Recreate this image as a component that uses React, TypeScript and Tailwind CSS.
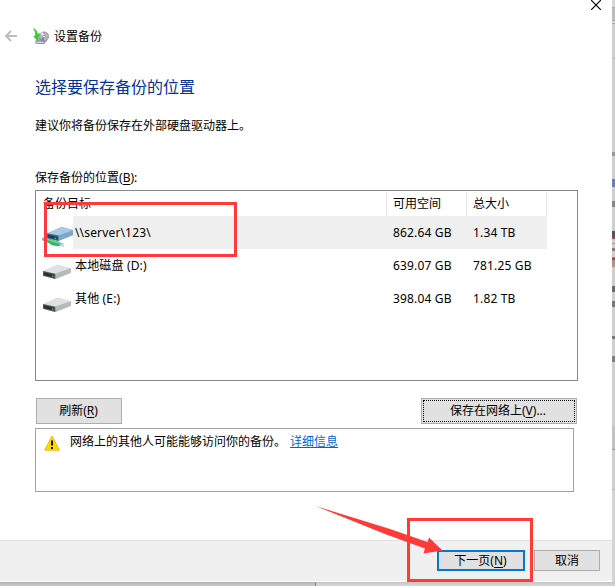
import type { ReactNode } from "react";
import clsx from "clsx";

interface Target {
  name: string;
  free: string;
  total: string;
  network?: boolean;
}

const targets: Target[] = [
  { name: "\\\\server\\123\\", free: "862.64 GB", total: "1.34 TB", network: true },
  { name: "本地磁盘 (D:)", free: "639.07 GB", total: "781.25 GB" },
  { name: "其他 (E:)", free: "398.04 GB", total: "1.82 TB" },
];

function BackupIcon() {
  return (
    <svg width="16" height="17" viewBox="0 0 16 17">
      <path d="M2.5 13l2.5-3h8l1 3-3 3H4z" fill="#a9adb0" />
      <path d="M2.8 13.2h8.4v2.2H2.8z" fill="#dfe1e3" stroke="#777b7e" strokeWidth="0.7" />
      <circle cx="11" cy="8.5" r="4.5" fill="#b6b9c4" stroke="#7c7e86" strokeWidth="0.8" />
      <path d="M11 8.5L7.5 6A4.3 4.3 0 0 1 10 4.3z" fill="#eceef4" />
      <path d="M11 8.5L14.6 7a4 4 0 0 1-.4 4z" fill="#d2a9b0" />
      <path d="M11 8.5L8 11.4a4 4 0 0 0 3 1.3z" fill="#6f83bd" />
      <circle cx="11" cy="8.5" r="1.2" fill="#fff" stroke="#66687a" strokeWidth="0.5" />
      <path d="M0.5 0.3C3.2 1.8 4.2 3.5 4.4 6.2L6.6 5.2 4.4 12.6 0.6 8.6 2.2 8C2.8 5 2 2.6 0.5 0.3z" fill="#2fd32f" stroke="#23b428" strokeWidth="0.4" />
    </svg>
  );
}

function DriveIcon() {
  return (
    <svg width="28" height="16" viewBox="0 0 28 16">
      <path d="M0 7.3L14.5 0.8 28 4.5v4.3L12.3 15 0 11.8z" fill="#b9babc" />
      <path d="M0.3 7L14.5 0.8 27.8 4.2 12.2 9.8z" fill="#e0e1e4" />
      <path d="M12.2 9.8L28 4.4v4.3L12.3 15z" fill="#b8b9bc" />
      <path d="M0 7l12.3 2.8V15L0 11.8z" fill="#55585a" />
      <path d="M1 8.4l10.2 2.4v2.8L1 11.1z" fill="#292e2e" />
      <path d="M8.8 11.3l1.6.4v1.2l-1.6-.4z" fill="#36d84b" />
    </svg>
  );
}

function NetworkDriveIcon() {
  return (
    <svg width="32" height="22" viewBox="0 0 32 22">
      <path d="M0.5 11.5l21 5.8v3.5L0.5 14.5z" fill="#8fc0d6" />
      <path d="M4 11.7l13.5 4.3v4.6L10 19.2 4 15.2z" fill="#35b66b" />
      <path d="M5 12.6l12.5 4v1.4L5 14z" fill="#72d893" />
      <ellipse cx="20.7" cy="19" rx="1.6" ry="1.8" fill="#c5e2ee" />
      <ellipse cx="1.8" cy="13.2" rx="1.5" ry="1.8" fill="#79a9c2" />
      <path d="M5 7.5L19.5 1 31 4v5.3L16.6 15 5 12.3z" fill="#7ba8cc" />
      <path d="M5 7.3L19.5 0.8 31 4 16.6 9.6z" fill="#a8c9e3" />
      <path d="M5 7.3L16.6 9.6V15L5 12.3z" fill="#43698a" />
      <path d="M6 8.8l9.6 2.2v2.7L6 11.6z" fill="#1c3d54" />
      <path d="M12.5 11.4l1.6.4v1.3l-1.6-.4z" fill="#34e04f" />
    </svg>
  );
}

function WarningIcon() {
  return (
    <svg width="16" height="16" viewBox="0 0 16 16">
      <path d="M8 .8L15.4 15.2H.6z" fill="#ffd800" stroke="#f9b91a" strokeLinejoin="round" />
      <path d="M7 5.5h2v5H7zM7 12h2v2H7z" fill="#111" />
    </svg>
  );
}

function Key({ children }: { children: string }) {
  return (
    <>
      (<span className="underline decoration-1 underline-offset-2">{children}</span>)
    </>
  );
}

function Button({ className, children }: { className?: string; children: ReactNode }) {
  return (
    <button
      type="button"
      className={clsx("flex shrink-0 items-center justify-center bg-[#e1e1e1] leading-4 whitespace-nowrap", className)}
    >
      <span>{children}</span>
    </button>
  );
}

function TargetList() {
  return (
    <div className="h-[191px] w-[543px] border border-[#828790] pt-px">
      <div className="flex h-[24px] leading-[23px]">
        <div className="w-[351px] border-r border-[#e5e5e5] pl-[7px]">备份目标</div>
        <div className="w-20 border-r border-[#e5e5e5] pl-[6px]">可用空间</div>
        <div className="w-20 border-r border-[#e5e5e5] pl-[6px]">总大小</div>
      </div>
      {targets.map((target) => (
        <div key={target.name} className="flex h-[33px] w-[511px] leading-[33px] tracking-[0.16px]">
          <div className={clsx("w-[37px] shrink-0", target.network ? "pt-[10px] pl-[6px]" : "pt-[15px] pl-[7px]")}>
            {target.network ? <NetworkDriveIcon /> : <DriveIcon />}
          </div>
          <div className={clsx("flex flex-1", target.network && "bg-[#efefef]")}>
            <div className="w-[320px] pl-[2px]">{target.name}</div>
            <div className="w-20">{target.free}</div>
            <div>{target.total}</div>
          </div>
        </div>
      ))}
    </div>
  );
}

// Slivers of the window behind the dialog, top to bottom.
const slivers = [
  "h-[7px] bg-[#d8d8d8]",
  "h-[14px] border-y border-[#a9a9a9] bg-[#bdbdbd]",
  "h-[2px] bg-[#d8d8d8]",
  "h-px bg-[#aaa]",
  "h-[34px] bg-[#cfcfcf]",
  "h-px bg-[#bbb]",
  "h-[93px] bg-[#cfcfcf]",
  "h-[4px] bg-[#999]",
  "h-[23px] bg-[#cfcfcf]",
  "h-[8px] bg-[#6581b8]",
  "h-[14px] bg-[#cfcfcf]",
  "h-[6px] bg-[#85858a]",
  "h-[24px] bg-[#cfcfcf]",
  "h-[6px] bg-[#555]",
  "h-[2px] bg-[#d33]",
  "h-[4px] bg-[#cfcfcf]",
  "h-px bg-[#999]",
  "h-[4px] bg-[#cfcfcf]",
  "h-[3px] bg-[#8c7c68]",
  "h-[6px] bg-[#cfcfcf]",
  "h-px bg-[#888]",
  "h-[2px] bg-[#d33]",
  "h-[7px] bg-[#a49a88]",
  "h-[19px] bg-[#cfcfcf]",
  "h-[6px] bg-[#666a72]",
  "h-[9px] bg-[#cfcfcf]",
  "h-[6px] bg-[#727b80]",
  "h-[29px] bg-[#cfcfcf]",
  "h-[3px] bg-[#777]",
  "h-[17px] bg-[#cfcfcf]",
  "h-[6px] bg-[#808080]",
  "h-[64px] bg-[#cfcfcf]",
  "h-[24px] border-b border-[#999] bg-[#c2c2c2]",
  "h-[40px] border-b border-[#b9b9b9] bg-[#d0d0d0]",
  "flex-1 bg-[#d4d4d4]",
];

export default function App() {
  return (
    <div className="relative flex h-[586px] w-[615px] flex-col overflow-hidden bg-white font-['Noto_Sans','Noto_Sans_CJK_SC',sans-serif] text-[12px] text-black">
      <div className="flex h-[582px]">
        <main className="flex w-[612px] flex-col bg-white">
          <div className="flex h-[11px] justify-end pr-[11px]">
            <svg width="10" height="10" viewBox="0 0 10 10" className="shrink-0">
              <path d="M0 0l10 10M10 0L0 10" stroke="#000" strokeWidth="1.2" />
            </svg>
          </div>
          <header className="mt-[14px] flex h-[22px] items-center pl-[5px]">
            <svg width="12" height="12" viewBox="0 0 12 12" fill="none" stroke="#bcbcbc" strokeWidth="1.8">
              <path d="M12 6H1M6 1L1 6l5 5" />
            </svg>
            <div className="ml-4">
              <BackupIcon />
            </div>
            <span className="ml-[5px] pt-[2px]">设置备份</span>
          </header>
          <section className="flex h-[493px] flex-col pl-[35px]">
            <h1 className="mt-[28px] h-6 text-[16px] leading-6 text-[#003399]">选择要保存备份的位置</h1>
            <p className="mt-[17px] h-[20px] leading-5">建议你将备份保存在外部硬盘驱动器上。</p>
            <div className="mt-[32px] h-[22px] leading-5">
              保存备份的位置<Key>B</Key>:
            </div>
            <TargetList />
            <div className="mt-[17px] flex h-[26px] w-[542px] justify-between pl-px">
              <Button className="w-[86px] border border-[#adadad] pr-px">
                刷新<Key>R</Key>
              </Button>
              <Button className="w-[156px] border border-[#adadad] pr-[2px] outline-1 -outline-offset-3 outline-dotted outline-black">
                保存在网络上<Key>V</Key>...
              </Button>
            </div>
            <div className="mt-1 flex h-[64px] w-[539px] items-start border border-[#a0a0a0] pt-[5px] pl-2">
              <div className="pt-px">
                <WarningIcon />
              </div>
              <span className="ml-[10px] leading-4">网络上的其他人可能能够访问你的备份。</span>
              <a className="ml-1 leading-4 text-[#0066cc] underline">详细信息</a>
            </div>
          </section>
          <footer className="flex h-[42px] justify-end gap-[9px] border-t border-b border-t-[#dfdfdf] border-b-white bg-[#f0f0f0] pt-[9px] pr-3">
            <Button className="h-[21px] w-[88px] border-2 border-[#0078d7] pr-px">
              下一页<Key>N</Key>
            </Button>
            <Button className="h-[21px] w-[66px] border border-[#adadad]">取消</Button>
          </footer>
        </main>
        <aside className="flex w-[3px] flex-col">
          {slivers.map((sliver, i) => (
            <div key={i} className={clsx("shrink-0", sliver)} />
          ))}
        </aside>
      </div>
      <div className="flex h-1">
        <div className="w-[316px] border-r border-[#888] bg-linear-to-b from-[#b3b3b3] to-[#cacaca]" />
        <div className="flex-1 bg-linear-to-b from-[#c4c4c4] to-[#d8d8d8]" />
      </div>

      {/* annotations */}
      <div className="absolute top-[202px] left-[44px] h-[55px] w-[193px] border-3 border-[#ff3b39]" />
      <div className="absolute top-[518px] left-[407px] h-[64px] w-[126px] border-3 border-[#ff3b39]" />
      <svg className="absolute top-[500px] left-[310px]" width="140" height="60" viewBox="0 0 140 60">
        <path d="M5.5 6L80 29 117.5 42 119 37.5 132.5 50.5 113.5 53.5 115 48.5 75 34z" fill="#ff3b39" />
      </svg>
    </div>
  );
}
